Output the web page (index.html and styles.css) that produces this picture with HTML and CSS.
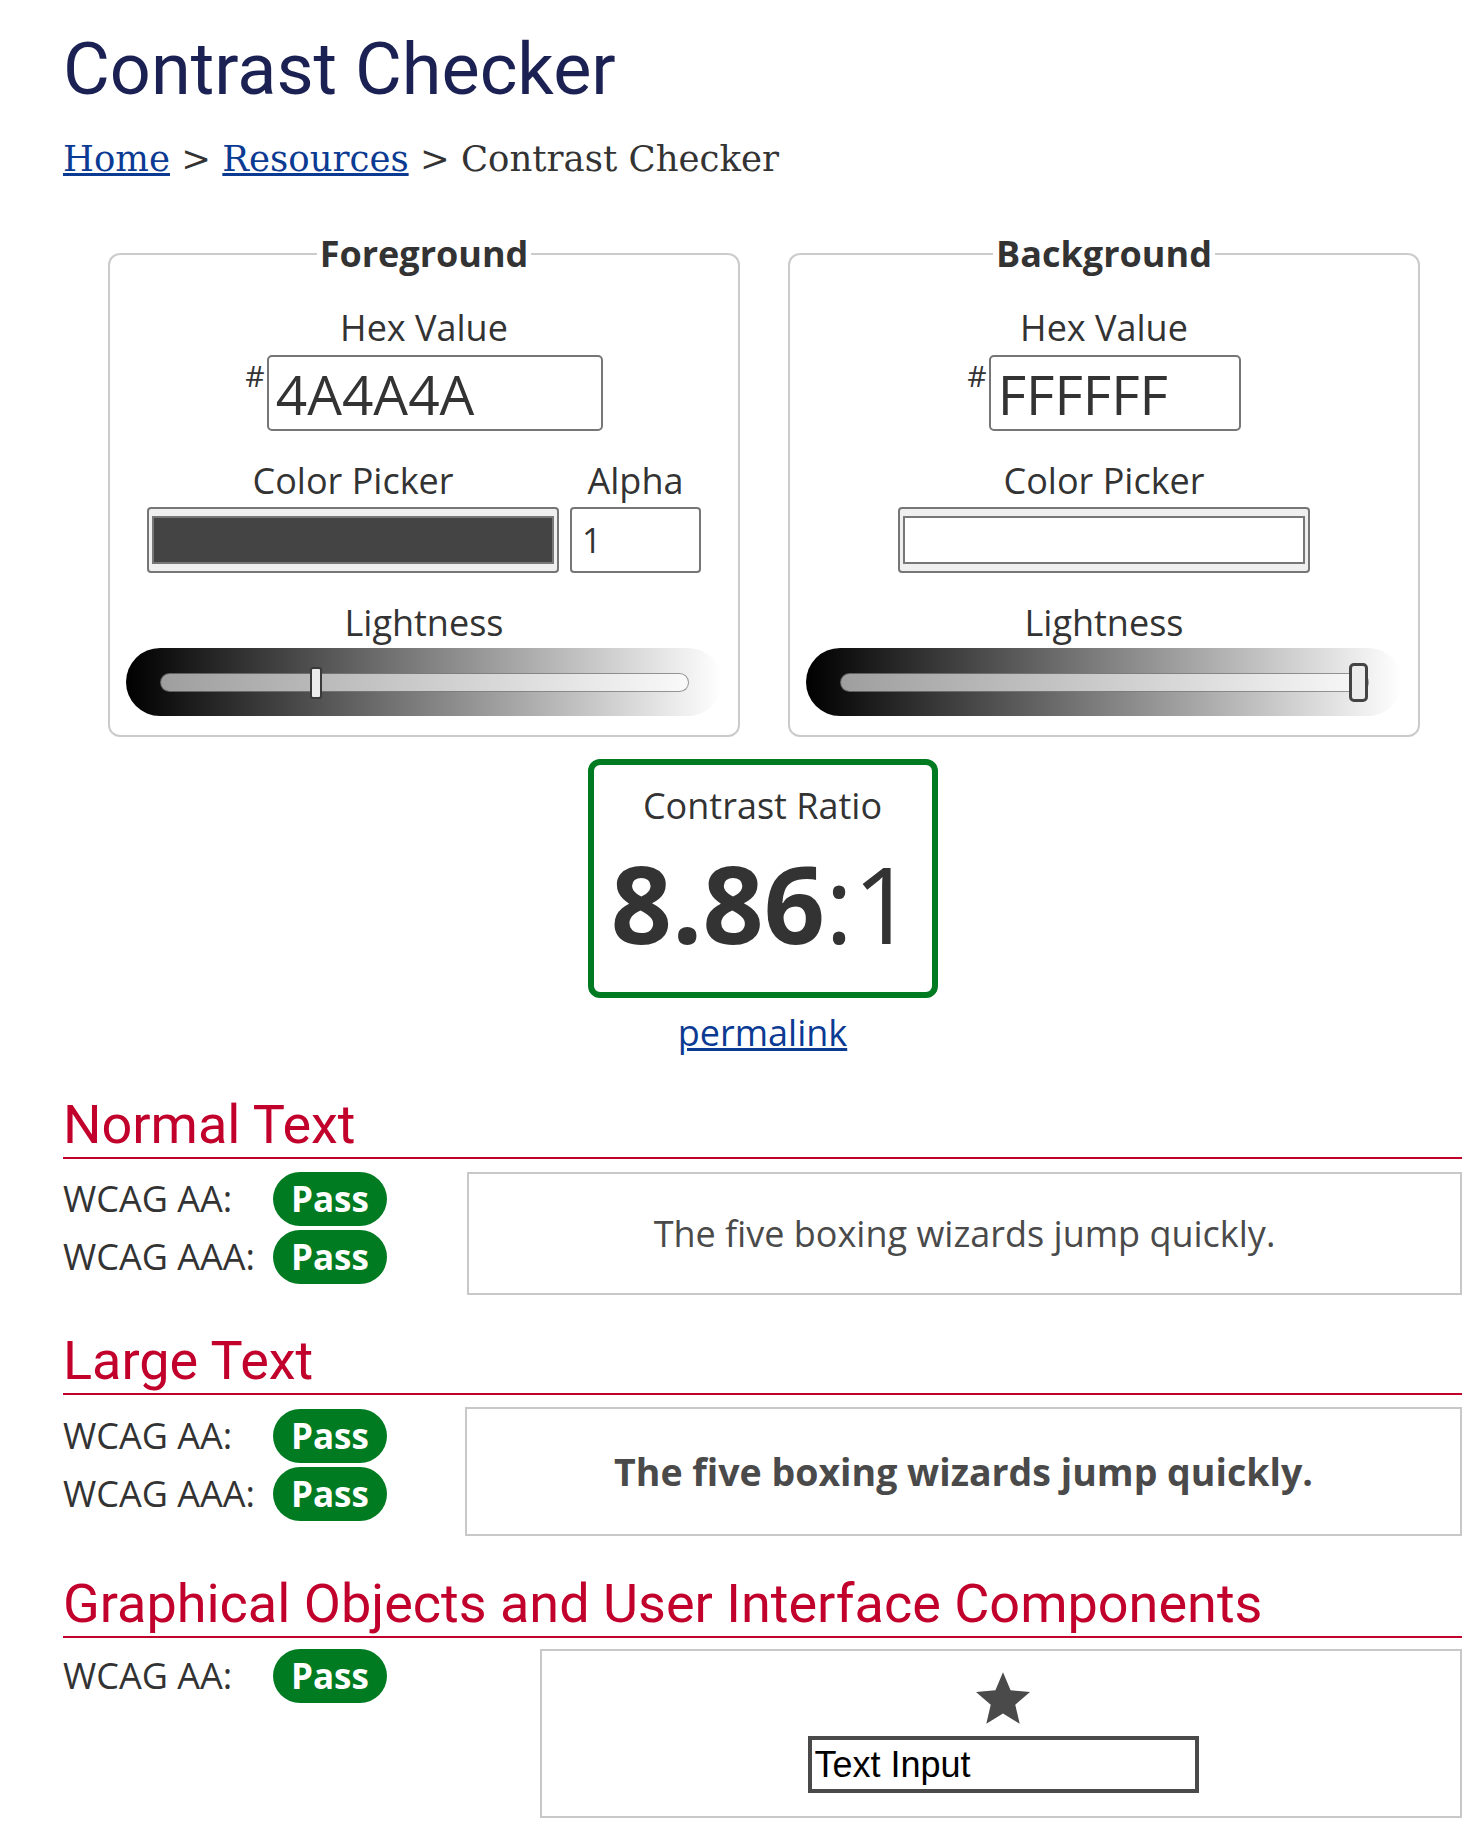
FILE: index.html
```html
<!DOCTYPE html>
<html lang="en">
<head>
<meta charset="utf-8">
<title>Contrast Checker</title>
<link rel="stylesheet" href="styles.css">
</head>
<body>
<main class="page">
  <h1 class="title">Contrast Checker</h1>
  <nav class="crumbs"><a href="#">Home</a> &gt; <a href="#">Resources</a> &gt; Contrast Checker</nav>

  <div class="pickers">
    <fieldset class="picker">
      <legend>Foreground</legend>
      <div class="group">
        <div class="label">Hex Value</div>
        <div class="hex-row"><span class="hash">#</span><input class="hex hex-fg" type="text" value="4A4A4A"></div>
      </div>
      <div class="group">
        <div class="picker-row">
          <div class="col">
            <div class="label">Color Picker</div>
            <div class="swatch-box"><div class="swatch swatch-fg"></div></div>
          </div>
          <div class="col">
            <div class="label">Alpha</div>
            <input class="alpha" type="text" value="1">
          </div>
        </div>
      </div>
      <div class="group">
        <div class="label">Lightness</div>
        <div class="slider"><div class="track"><div class="thumb" style="left: calc((100% - 12px) * 0.29)"></div></div></div>
      </div>
    </fieldset>

    <fieldset class="picker">
      <legend>Background</legend>
      <div class="group">
        <div class="label">Hex Value</div>
        <div class="hex-row"><span class="hash">#</span><input class="hex hex-bg" type="text" value="FFFFFF"></div>
      </div>
      <div class="group">
        <div class="picker-row">
          <div class="col">
            <div class="label">Color Picker</div>
            <div class="swatch-box swatch-box-bg"><div class="swatch swatch-bg"></div></div>
          </div>
        </div>
      </div>
      <div class="group">
        <div class="label">Lightness</div>
        <div class="slider"><div class="track"><div class="thumb thumb-bg" style="left: calc((100% - 19px) * 1)"></div></div></div>
      </div>
    </fieldset>
  </div>

  <div class="ratio-wrap">
    <div class="ratio-box">
      <div class="ratio-label">Contrast Ratio</div>
      <div class="ratio-value"><b>8.86</b>:1</div>
    </div>
    <a class="permalink" href="#">permalink</a>
  </div>

  <section class="result result-normal">
    <h2 class="result-title">Normal Text</h2>
    <div class="result-body">
      <div class="grades grades-normal">
        <div class="grade"><span class="grade-label">WCAG AA:</span><span class="badge">Pass</span></div>
        <div class="grade"><span class="grade-label">WCAG AAA:</span><span class="badge">Pass</span></div>
      </div>
      <div class="sample sample-normal">The five boxing wizards jump quickly.</div>
    </div>
  </section>

  <section class="result result-large">
    <h2 class="result-title">Large Text</h2>
    <div class="result-body">
      <div class="grades grades-large">
        <div class="grade"><span class="grade-label">WCAG AA:</span><span class="badge">Pass</span></div>
        <div class="grade"><span class="grade-label">WCAG AAA:</span><span class="badge">Pass</span></div>
      </div>
      <div class="sample sample-large">The five boxing wizards jump quickly.</div>
    </div>
  </section>

  <section class="result result-graphic">
    <h2 class="result-title">Graphical Objects and User Interface Components</h2>
    <div class="result-body">
      <div class="grades grades-graphic">
        <div class="grade"><span class="grade-label">WCAG AA:</span><span class="badge">Pass</span></div>
      </div>
      <div class="sample sample-graphic">
        <svg class="star" width="54" height="52" viewBox="2 2 20 19" aria-hidden="true"><path d="M12 17.27L18.18 21l-1.64-7.03L22 9.24l-7.19-.61L12 2 9.19 8.63 2 9.24l5.46 4.73L5.82 21z"/></svg>
        <input class="demo-input" type="text" value="Text Input">
      </div>
    </div>
  </section>
</main>
</body>
</html>
```

FILE: styles.css
```css
* { box-sizing: border-box; }
html, body { margin: 0; background: #fff; }
body {
  font-family: "Open Sans", "Noto Sans", sans-serif;
  font-size: 36px;
  color: #333;
}
.page {
  width: 1399px;
  margin-left: 63px;
  padding-top: 27px;
  padding-bottom: 20px;
}
.title {
  margin: 0;
  font-family: Roboto, sans-serif;
  font-weight: 400;
  font-size: 72px;
  line-height: 86px;
  color: #1b2152;
}
.crumbs {
  margin-top: 24px;
  font-family: "DejaVu Serif", serif;
  font-size: 35.5px;
  line-height: 44px;
  color: #333;
}
.crumbs a { color: #0b3a93; }

/* pickers */
.pickers {
  display: flex;
  gap: 48px;
  margin-top: 49px;
  margin-left: 45px;
}
.picker {
  width: 632px;
  min-width: 0;
  margin: 0;
  padding: 26px 0 19px;
  border: 2px solid #cbcbcb;
  border-radius: 12px;
  text-align: center;
}
.picker legend {
  margin: 0 auto;
  padding: 0 3px;
  font-weight: 700;
  font-size: 36px;
  line-height: 48px;
  color: #333;
}
.label { line-height: 48px; }
.group + .group { margin-top: 26px; }
.hex-row {
  display: flex;
  justify-content: center;
  align-items: flex-start;
  margin-top: 3px;
}
.hash {
  font-size: 30px;
  line-height: 41px;
  margin-right: 2px;
}
.hex {
  display: block;
  height: 76px;
  margin: 0;
  padding: 0 7px;
  font-family: "Open Sans", sans-serif;
  font-size: 55px;
  color: #333;
  background: #fff;
  border: 2px solid #767676;
  border-radius: 5px;
  outline: none;
}
.hex-fg { width: 336px; }
.hex-bg { width: 252px; }
.picker-row {
  display: flex;
  justify-content: center;
  gap: 11px;
}
.swatch-box {
  width: 412px;
  height: 66px;
  margin-top: 2px;
  padding: 7px 3px;
  background: #efefef;
  border: 2px solid #767676;
  border-radius: 4px;
}
.swatch {
  height: 100%;
  border: 2px solid #777;
}
.swatch-fg { background: #444; }
.swatch-bg { background: #fff; }
.alpha {
  display: block;
  width: 131px;
  height: 66px;
  margin: 2px 0 0;
  padding: 0 10px;
  font-family: "Open Sans", sans-serif;
  font-size: 34px;
  color: #333;
  background: #fff;
  border: 2px solid #767676;
  border-radius: 4px;
  outline: none;
}
.slider {
  width: 596px;
  height: 68px;
  margin: 1px auto 0;
  padding: 25px 33px 0 34px;
  border-radius: 34px;
  background: linear-gradient(to right, #000, #fff);
}
.track {
  position: relative;
  height: 19px;
  border-radius: 10px;
  background: rgba(255, 255, 255, 0.6);
  border: 1px solid rgba(0, 0, 0, 0.4);
}
.thumb {
  position: absolute;
  top: -7px;
  width: 12px;
  height: 32px;
  background: #ececec;
  border: 2px solid #3a3a3a;
  border-radius: 3px;
}
.thumb-bg {
  top: -11px;
  width: 19px;
  height: 39px;
  border-width: 3px;
  border-color: #444;
  border-radius: 5px;
}

/* ratio */
.ratio-wrap {
  display: flex;
  flex-direction: column;
  align-items: center;
  margin-top: 22px;
}
.ratio-box {
  width: 350px;
  height: 239px;
  border: 6px solid #007b22;
  border-radius: 12px;
  text-align: center;
}
.ratio-label {
  margin-top: 17px;
  line-height: 48px;
}
.ratio-value {
  margin-top: 13px;
  font-size: 107px;
  line-height: 120px;
  color: #333;
}
.ratio-value b { font-weight: 700; }
.permalink {
  margin-top: 11px;
  line-height: 48px;
  color: #0b3a93;
}

/* results */
.result-title {
  margin: 0;
  font-family: Roboto, sans-serif;
  font-weight: 400;
  font-size: 54px;
  line-height: 64px;
  color: #c1002b;
  border-bottom: 2px solid #c1002b;
}
.result-normal { margin-top: 36px; }
.result-large { margin-top: 34px; }
.result-graphic { margin-top: 36px; }
.result-body { display: flex; }
.result-normal .result-body { margin-top: 13px; }
.result-large .result-body { margin-top: 12px; }
.result-graphic .result-body { margin-top: 11px; }
.grades {
  flex-shrink: 0;
  display: flex;
  flex-direction: column;
  gap: 4px;
}
.grades-normal { width: 404px; }
.grades-large { width: 402px; margin-top: 2px; }
.grades-graphic { width: 477px; }
.grade {
  display: flex;
  align-items: center;
  height: 54px;
}
.grade-label {
  width: 210px;
  line-height: 54px;
}
.badge {
  height: 54px;
  padding: 0 18px;
  line-height: 54px;
  font-weight: 700;
  font-size: 35px;
  color: #fff;
  background: #007b22;
  border-radius: 27px;
}
.sample {
  flex: 1;
  display: flex;
  align-items: center;
  justify-content: center;
  border: 2px solid #c8c8c8;
  color: #4a4a4a;
}
.sample-normal { height: 123px; }
.sample-large {
  height: 129px;
  font-size: 37.5px;
  font-weight: 700;
}
.sample-graphic {
  height: 169px;
  flex-direction: column;
  justify-content: flex-start;
  padding: 21px 0 0 4px;
}
.star {
  display: block;
  fill: #4a4a4a;
}
.demo-input {
  display: block;
  width: 391px;
  height: 57px;
  margin: 12px 0 0;
  padding: 0 3px;
  font-family: "Liberation Sans", Arial, sans-serif;
  font-size: 36px;
  color: #000;
  background: #fff;
  border: 4px solid #4a4a4a;
  border-radius: 0;
  outline: none;
}
```
